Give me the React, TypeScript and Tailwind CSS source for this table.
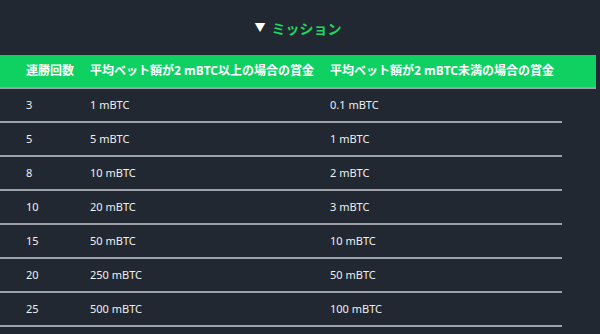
import React from 'react';

interface Mission {
  streak: string;
  high: string;
  low: string;
}

const missions: Mission[] = [
  { streak: '3', high: '1 mBTC', low: '0.1 mBTC' },
  { streak: '5', high: '5 mBTC', low: '1 mBTC' },
  { streak: '8', high: '10 mBTC', low: '2 mBTC' },
  { streak: '10', high: '20 mBTC', low: '3 mBTC' },
  { streak: '15', high: '50 mBTC', low: '10 mBTC' },
  { streak: '20', high: '250 mBTC', low: '50 mBTC' },
  { streak: '25', high: '500 mBTC', low: '100 mBTC' },
];

const App: React.FC = () => {
  return (
    <div
      className="w-[600px] h-[334px] overflow-hidden bg-[#222831] text-white"
      style={{ fontFamily: '"Noto Sans", "Noto Sans CJK JP", sans-serif' }}
    >
      {/* Title */}
      <div className="h-[55px] flex items-center justify-center pt-[2px] pr-[4px]">
        <span className="text-[14px] font-bold text-[#1ed760] flex items-center gap-[6px]">
          <span className="text-white text-[11px]">▼</span>
          ミッション
        </span>
      </div>

      {/* Header */}
      <div className="w-[596px] h-[34px] bg-[#0fd162] border-b-2 border-[#9aa0a6] flex items-center text-[12px] font-bold">
        <div className="w-[90px] pl-[26px]">連勝回数</div>
        <div className="w-[240px]">平均ベット額が2 mBTC以上の場合の賞金</div>
        <div>平均ベット額が2 mBTC未満の場合の賞金</div>
      </div>

      {/* Rows */}
      {missions.map((m) => (
        <div
          key={m.streak}
          className="w-[562px] h-[34px] border-b-2 border-[#9ea2a8] flex items-center text-[11px] text-[#eef0f2]"
        >
          <div className="w-[90px] pl-[26px]">{m.streak}</div>
          <div className="w-[240px]">{m.high}</div>
          <div>{m.low}</div>
        </div>
      ))}
    </div>
  );
};

export default App;
